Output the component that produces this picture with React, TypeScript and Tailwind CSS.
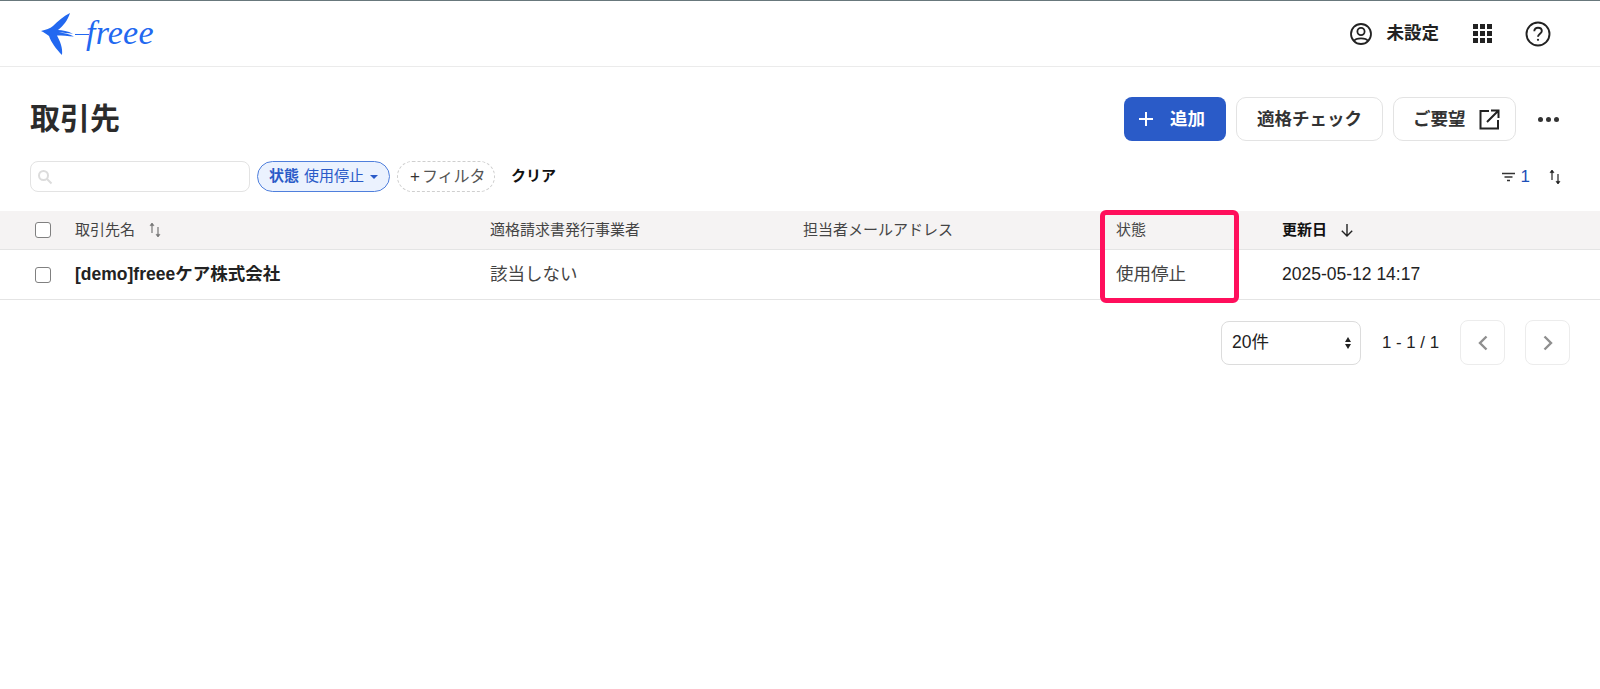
import React from "react";

const FONT = "font-['Liberation_Sans','Noto_Sans_CJK_JP',sans-serif]";

function Logo() {
  return (
    <div className="flex items-center">
      <svg width="34" height="46" viewBox="0 0 34 46" className="shrink-0">
        <path d="M0 20 C5 18.5 9 18 12 15 C17 10 23 5 29 2 C27 9 22 15 17 19 C21 19 27 20 32 23 C27 22 22 21.5 18 21.5 C23 22 29 23 33 25.5 C27 25 21 24.5 16 24.5 C19 30 22 37 21 44 C15 38 10 31 8 25 C5 23 3 21 0 20 Z" fill="#2268f0" />
      </svg>
      <div className="w-[14px] h-[1.5px] bg-[#2268f0] mt-[2px]" />
      <span className="font-['Liberation_Serif',serif] italic text-[34px] leading-none text-[#2268f0] -ml-[3px] -mt-[1px] tracking-[0.2px]">freee</span>
    </div>
  );
}

function SortIcon({ color = "#555" }: { color?: string }) {
  return (
    <svg width="12" height="16" viewBox="0 0 12 16" fill="none" stroke={color} strokeWidth="1.2">
      <path d="M3 11 V1.5" />
      <path d="M9 5 V14.5" />
      <path d="M1 3.6 L3 1 L5 3.6 Z" fill={color} strokeWidth="0.6" />
      <path d="M7 12.4 L9 15 L11 12.4 Z" fill={color} strokeWidth="0.6" />
    </svg>
  );
}

function Checkbox() {
  return <div className="w-[16px] h-[16px] rounded-[3px] border-[1.5px] border-[#808080] bg-white" />;
}

export default function App() {
  return (
    <div className={`${FONT} relative min-h-[689px] bg-white text-[#222]`}>
      <header className="h-[67px] border-t border-t-[#68787c] border-b border-b-[#ebebeb] flex items-center pl-[41px] pr-[49px]">
        <Logo />
        <div className="ml-auto flex items-center">
          <svg width="24" height="24" viewBox="0 0 24 24" fill="none" stroke="#222" strokeWidth="1.8">
            <circle cx="12" cy="12" r="10" />
            <circle cx="12" cy="9.5" r="3.6" />
            <path d="M5 19 C7 15.5 17 15.5 19 19" />
          </svg>
          <span className="ml-[14px] text-[17.5px] font-bold leading-none">未設定</span>
          <div className="ml-[34px] grid grid-cols-3 gap-[2px]">
            {Array.from({ length: 9 }).map((_, i) => (
              <div key={i} className="w-[5px] h-[5px] bg-[#222]" />
            ))}
          </div>
          <svg className="ml-[33px]" width="26" height="26" viewBox="0 0 26 26" fill="none" stroke="#222" strokeWidth="1.9">
            <circle cx="13" cy="13" r="11.5" />
            <path d="M9.3 10.2 C9.3 7.8 11 6.7 13 6.7 C15.2 6.7 16.8 8 16.8 10 C16.8 12.6 13 13 13 15.8" />
            <circle cx="13" cy="18.8" r="1.1" fill="#222" stroke="none" />
          </svg>
        </div>
      </header>

      <div className="flex items-center pl-[30px] pr-[40px] pt-[30px]">
        <h1 className="text-[30px] font-bold leading-[44px] text-[#2b2b2b]">取引先</h1>
        <div className="ml-auto flex items-center">
          <button className="h-[44px] w-[102px] rounded-[8px] bg-[#2a5bc8] text-white flex items-center pl-[14px] gap-[16px] text-[17.5px] font-bold">
            <svg width="16" height="16" viewBox="0 0 16 16" stroke="#fff" strokeWidth="2"><path d="M8 1 V15 M1 8 H15" /></svg>
            追加
          </button>
          <button className="ml-[10px] h-[44px] w-[147px] rounded-[10px] border border-[#e3e3e3] bg-white text-[17.5px] font-bold text-[#333]">適格チェック</button>
          <button className="ml-[10px] h-[44px] w-[123px] rounded-[10px] border border-[#e3e3e3] bg-white flex items-center pl-[19px] gap-[13px] text-[17.5px] font-bold text-[#333]">
            ご要望
            <svg width="21" height="21" viewBox="0 0 21 21" fill="none" stroke="#222" strokeWidth="2">
              <path d="M10 2 H1.5 V19.5 H19 V11" />
              <path d="M8 13 L19 2 M12 1.5 H19.5 V9" />
            </svg>
          </button>
          <div className="ml-[20px] w-[24px] flex gap-[3px] justify-center">
            <span className="w-[5px] h-[5px] rounded-full bg-[#333]" />
            <span className="w-[5px] h-[5px] rounded-full bg-[#333]" />
            <span className="w-[5px] h-[5px] rounded-full bg-[#333]" />
          </div>
        </div>
      </div>

      <div className="flex items-center pl-[30px] pr-[39px] mt-[20px] h-[31px]">
        <div className="w-[220px] h-[31px] rounded-[8px] border border-[#e3e3e3] flex items-center pl-[6px]">
          <svg width="16" height="16" viewBox="0 0 16 16" fill="none" stroke="#dcdcdc" strokeWidth="2">
            <circle cx="6.5" cy="6.5" r="4.5" />
            <path d="M10 10 L14.5 14.5" />
          </svg>
        </div>
        <div className="ml-[7px] w-[133px] h-[31px] rounded-full border border-[#4f7fdc] bg-[#ebf2fe] flex items-center pl-[11px] text-[15px] text-[#2a5bc8]">
          <span className="font-bold">状態</span>
          <span className="ml-[5px]">使用停止</span>
          <span className="ml-[6px] w-0 h-0 border-l-[4px] border-r-[4px] border-t-[4px] border-l-transparent border-r-transparent border-t-[#2a5bc8]" />
        </div>
        <div className="ml-[7px] w-[98px] h-[31px] rounded-full border border-dashed border-[#cfcfcf] flex items-center pl-[12px] text-[16px] text-[#555]">
          <span className="text-[#333] text-[17px] mr-[2px]">+</span>フィルタ
        </div>
        <span className="ml-[16px] text-[15px] font-bold text-[#111]">クリア</span>
        <div className="ml-auto flex items-center">
          <svg width="13" height="10" viewBox="0 0 13 10" stroke="#333" strokeWidth="1.4">
            <path d="M0 1.5 H13 M2.5 5 H10.5 M5 8.5 H8" />
          </svg>
          <span className="ml-[6px] text-[17px] leading-none text-[#1d4fb8]">1</span>
          <span className="ml-[19px] flex"><SortIcon color="#222" /></span>
        </div>
      </div>

      <div className="mt-[19px] h-[39px] bg-[#f5f3f3] border-b border-[#e4e4e4] grid grid-cols-[75px_415px_313px_313px_166px_1fr] items-center text-[15px] text-[#444]">
        <div className="pl-[35px]"><Checkbox /></div>
        <div className="flex items-center">
          <span>取引先名</span>
          <span className="ml-[14px] flex"><SortIcon color="#777" /></span>
        </div>
        <div>適格請求書発行事業者</div>
        <div>担当者メールアドレス</div>
        <div>状態</div>
        <div className="flex items-center font-bold text-[#111]">
          <span>更新日</span>
          <svg className="ml-[13px]" width="14" height="14" viewBox="0 0 14 14" fill="none" stroke="#222" strokeWidth="1.4">
            <path d="M7 1 V13 M1.8 7.8 L7 13 L12.2 7.8" />
          </svg>
        </div>
      </div>

      <div className="h-[50px] border-b border-[#e4e4e4] grid grid-cols-[75px_415px_313px_313px_166px_1fr] items-center text-[17.5px] text-[#444]">
        <div className="pl-[35px]"><Checkbox /></div>
        <div className="font-bold text-[#222]">[demo]freeeケア株式会社</div>
        <div>該当しない</div>
        <div />
        <div>使用停止</div>
        <div className="text-[#222]">2025-05-12 14:17</div>
      </div>

      <div className="flex items-center justify-end pr-[30px] mt-[20px]">
        <div className="w-[140px] h-[44px] rounded-[8px] border border-[#dcdcdc] flex items-center pl-[10px] pr-[9px] text-[17.5px] text-[#222]">
          20件
          <div className="ml-auto flex flex-col gap-[2px]">
            <span className="w-0 h-0 border-l-[3.5px] border-r-[3.5px] border-b-[5px] border-l-transparent border-r-transparent border-b-[#222]" />
            <span className="w-0 h-0 border-l-[3.5px] border-r-[3.5px] border-t-[5px] border-l-transparent border-r-transparent border-t-[#222]" />
          </div>
        </div>
        <span className="ml-[21px] text-[16.8px] text-[#222]">1 - 1 / 1</span>
        <div className="ml-[21px] w-[45px] h-[45px] rounded-[8px] border border-[#ececec] flex items-center justify-center">
          <svg width="10" height="16" viewBox="0 0 10 16" fill="none" stroke="#8f8f8f" strokeWidth="2.4"><path d="M8.5 1.5 L2 8 L8.5 14.5" /></svg>
        </div>
        <div className="ml-[20px] w-[45px] h-[45px] rounded-[8px] border border-[#ececec] flex items-center justify-center">
          <svg width="10" height="16" viewBox="0 0 10 16" fill="none" stroke="#8f8f8f" strokeWidth="2.4"><path d="M1.5 1.5 L8 8 L1.5 14.5" /></svg>
        </div>
      </div>

      <div className="absolute left-[1100px] top-[210px] w-[139px] h-[93px] border-[5px] border-[#ff0f5c] rounded-[6px]" />
    </div>
  );
}
